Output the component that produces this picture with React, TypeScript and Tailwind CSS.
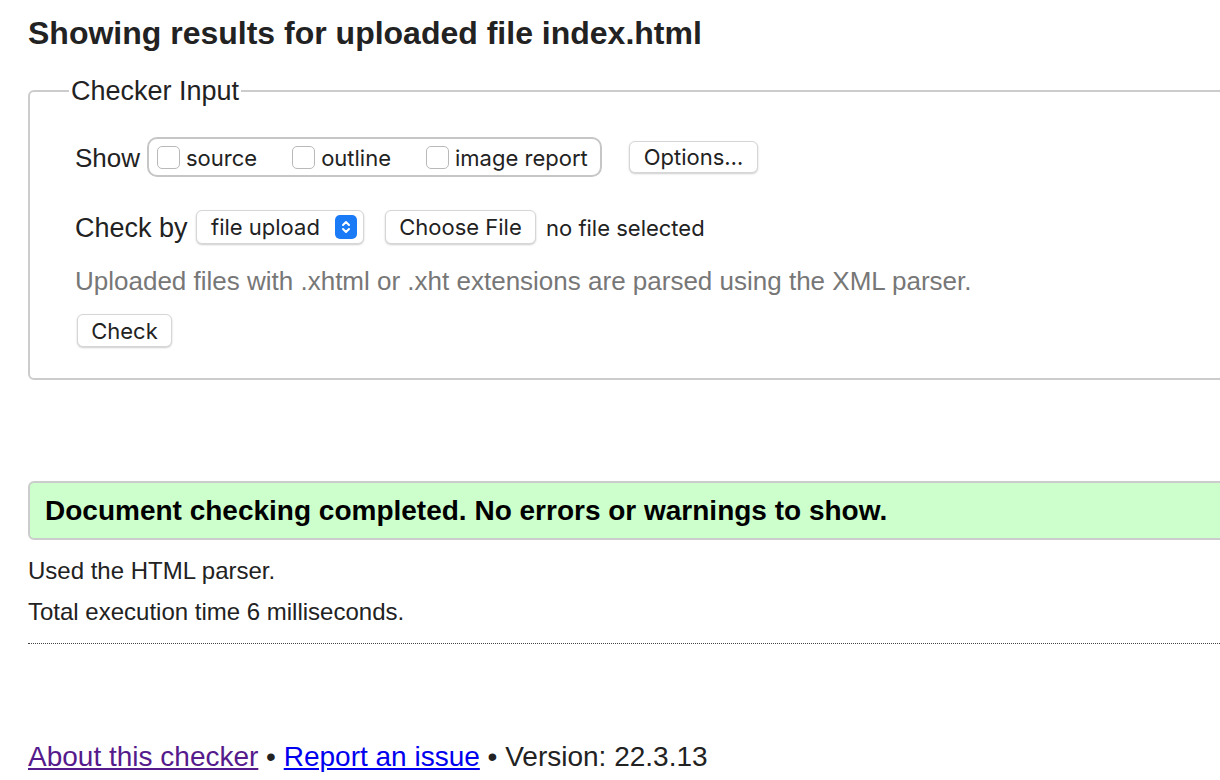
import React from "react";

const body = { fontFamily: '"Liberation Sans", Arial, sans-serif' };
const ui = { fontFamily: 'Inter, "Noto Sans", sans-serif' };

const Box = ({ label }: { label: string }) => (
  <label className="flex items-center gap-[6px]">
    <span className="h-[23px] w-[23px] rounded-[5px] border-[1.5px] border-[#b9b9b9] bg-white" />
    <span className="pt-[2px]">{label}</span>
  </label>
);

const Btn = ({ children, w }: { children: React.ReactNode; w: string }) => (
  <button
    className={`flex items-center justify-center rounded-[6px] border border-[#d6d6d6] bg-white pt-[1px] text-[22px] text-[#222] shadow-[0_1px_2px_rgba(0,0,0,0.2)] ${w}`}
    style={ui}
  >
    {children}
  </button>
);

export default function App() {
  return (
    <div className="h-[780px] w-[1220px] overflow-hidden bg-white text-[#222]" style={body}>
      <div className="w-[1260px] pl-[28px]">
        <h1 className="h-[66px] text-[32px] font-bold leading-[66px] text-[#222]">
          Showing results for uploaded file index.html
        </h1>

        <fieldset className="mt-[12px] w-[1240px] rounded-[6px] border-2 border-[#cccccc] pb-[31px] pl-[39px]">
          <legend className="px-[2px] text-[27px] leading-[26px]">Checker Input</legend>

          <div className="pl-[6px]">
            <div className="mt-[33px] flex h-[40px] items-center">
              <span className="w-[72px] pt-[2px] text-[26px]">Show</span>
              <div
                className="flex h-[40px] w-[455px] items-center gap-[35px] rounded-[10px] border-2 border-[#c6c6c6] pl-[8px] text-[22px]"
                style={ui}
              >
                <Box label="source" />
                <Box label="outline" />
                <Box label="image report" />
              </div>
              <div className="ml-[27px]">
                <Btn w="h-[32px] w-[129px]">Options…</Btn>
              </div>
            </div>

            <div className="mt-[33px] flex h-[34px] items-center">
              <span className="w-[121px] pt-[2px] text-[27px]">Check by</span>
              <div
                className="flex h-[34px] w-[168px] items-center justify-between rounded-[6px] border border-[#d6d6d6] bg-white pl-[14px] pr-[6px] text-[22px] shadow-[0_1px_2px_rgba(0,0,0,0.2)]"
                style={ui}
              >
                <span className="pt-[1px]">file upload</span>
                <span className="flex h-[24px] w-[22px] items-center justify-center rounded-[5px] bg-[#1b7bf7]">
                  <svg width="12" height="16" viewBox="0 0 12 16" fill="none">
                    <path d="M3 6l3-3 3 3M3 10l3 3 3-3" stroke="white" strokeWidth="2" strokeLinecap="round" strokeLinejoin="round" />
                  </svg>
                </span>
              </div>
              <div className="ml-[21px]">
                <Btn w="h-[34px] w-[151px]">Choose File</Btn>
              </div>
              <span className="ml-[10px] pt-[2px] text-[22px]" style={ui}>
                no file selected
              </span>
            </div>

            <p className="mt-[22px] text-[26px] leading-[30px] text-[#777777]">
              Uploaded files with .xhtml or .xht extensions are parsed using the XML parser.
            </p>

            <div className="mt-[18px] pl-[2px]">
              <Btn w="h-[33px] w-[95px]">Check</Btn>
            </div>
          </div>
        </fieldset>

        <div className="mt-[101px] flex h-[59px] w-[1240px] items-center rounded-[6px] border-2 border-[#cccccc] bg-[#ccffcc] pl-[15px]">
          <p className="text-[28px] font-bold text-black">
            Document checking completed. No errors or warnings to show.
          </p>
        </div>

        <p className="mt-[16px] text-[24px] leading-[30px]">Used the HTML parser.</p>
        <p className="mt-[11px] text-[24px] leading-[30px]">Total execution time 6 milliseconds.</p>

        <div className="mt-[16px] w-[1240px] border-t border-dotted border-[#444]" />

        <p className="mt-[95px] text-[28px] leading-[36px]">
          <a href="#" className="text-[#551a8b] underline">About this checker</a>
          {" • "}
          <a href="#" className="text-[#0000ee] underline">Report an issue</a>
          {" • Version: 22.3.13"}
        </p>
      </div>
    </div>
  );
}
